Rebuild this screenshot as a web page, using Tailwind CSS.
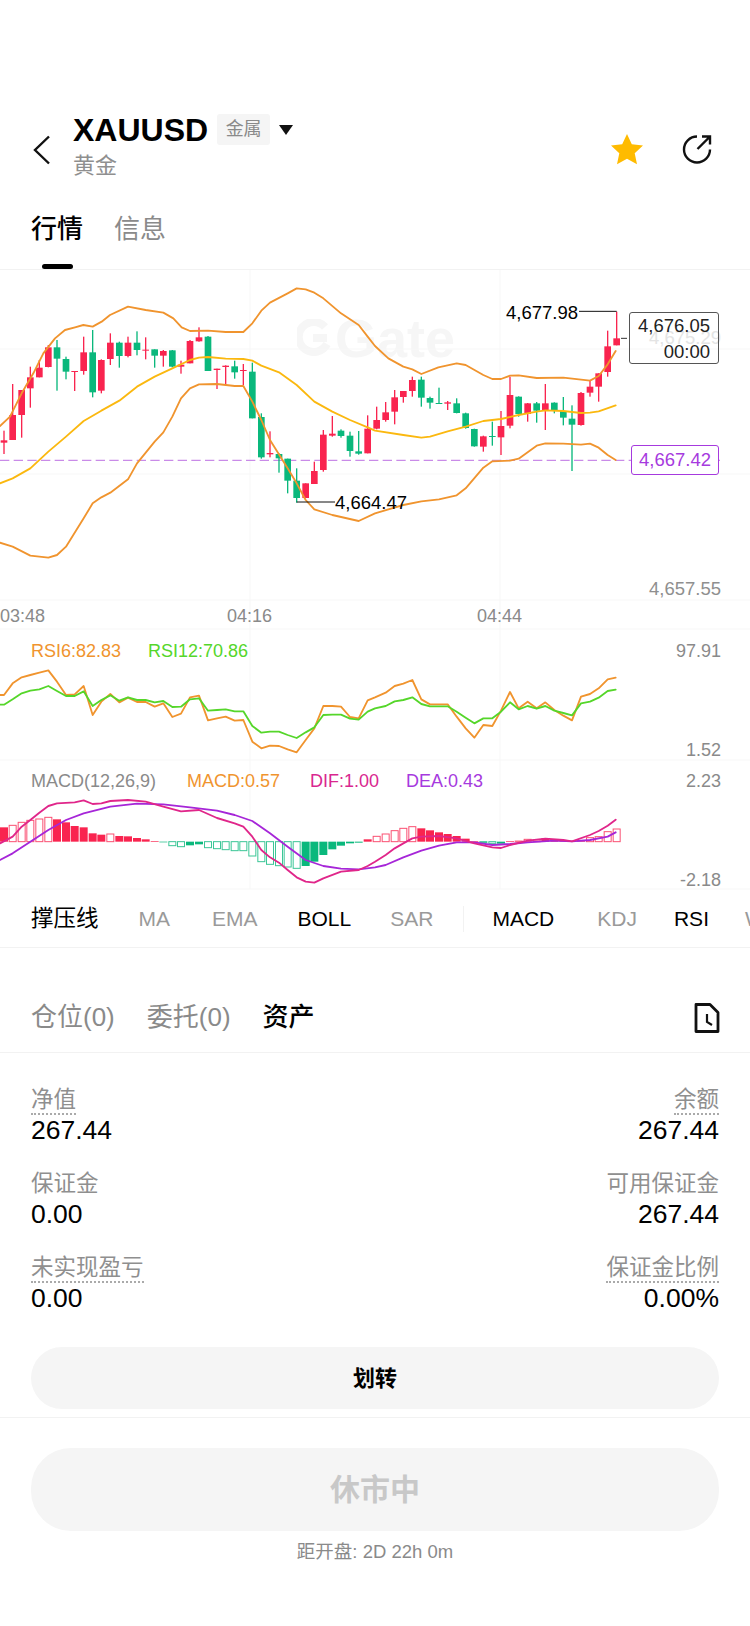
<!DOCTYPE html>
<html lang="zh">
<head>
    <meta charset="UTF-8">
    <meta name="viewport" content="width=device-width, initial-scale=1.0">
    <title>XAUUSD</title>
    <script src="https://cdn.jsdelivr.net/npm/@tailwindcss/browser@4"></script>
</head>
<body class="bg-white text-black font-['Liberation_Sans','Noto_Sans_CJK_SC',sans-serif]">
<div class="w-[750px] h-[1626px] overflow-hidden flex flex-col">

    <!-- header -->
    <div class="h-[200px] pt-[114px] pl-[33px] pr-[38px] flex items-start shrink-0">
        <svg width="18" height="30" viewBox="0 0 18 30" class="mt-[21px] mr-[22px] shrink-0" fill="none" stroke="#111" stroke-width="2.4"><path d="M16 1.5 2 15l14 13.5"/></svg>
        <div>
            <div class="flex items-center h-[31px]">
                <span class="text-[32px] font-bold leading-none">XAUUSD</span>
                <span class="ml-[9px] w-[53px] h-[31px] bg-[#f5f5f5] rounded-[3px] flex items-center justify-center text-[18px] text-[#8a8a8a]">金属</span>
                <svg width="14" height="10" viewBox="0 0 14 10" class="ml-[9px]"><path d="M0 0h14L7 10z" fill="#111"/></svg>
            </div>
            <div class="text-[22px] leading-none text-[#8f8f8f] mt-[10px]">黄金</div>
        </div>
        <div class="ml-auto flex items-center gap-[38px] mt-[19px]">
            <svg width="34" height="32" viewBox="0 0 34 32"><path d="M17 1l4.8 10.3 11.2 1.3-8.300 7.600 2.300 11.100-10-5.600-10 5.600 2.300-11.100L1 12.600l11.200-1.300z" fill="#ffbb00"/></svg>
            <svg width="30" height="30" viewBox="0 0 30 30" fill="none" stroke="#111" stroke-width="2.4"><path d="M15 2.500A13 13 0 1 0 28 15.500"/><path d="M15.500 15 27.500 3M20 2.500h8v8"/></svg>
        </div>
    </div>

    <!-- tabs -->
    <div class="h-[70px] shrink-0 border-b border-[#f2f2f2] pl-[31px] pt-[9px] relative flex items-start gap-[31px]">
        <span class="text-[26px] leading-[40px] font-medium">行情</span>
        <span class="text-[26px] leading-[40px] text-[#8a8a8a]">信息</span>
        <div class="absolute left-[42px] bottom-0 w-[31px] h-[5px] rounded-full bg-black"></div>
    </div>

    <!-- chart -->
    <div class="relative h-[620px] shrink-0">
        <div class="absolute left-[335px] top-[38px] text-[54px] font-bold leading-[60px] text-[#f6f6f6]">Gate</div>
        <svg class="absolute left-[297px] top-[49px]" width="34" height="38" viewBox="0 0 34 38" fill="none" stroke="#f6f6f6" stroke-width="8"><path d="M28 8A15 15 0 1 0 30 25"/><path d="M16 19h14"/></svg>
        <svg id="chart" class="absolute left-0 top-0" width="750" height="620" viewBox="0 0 2250 1860"></svg>

        <!-- price labels -->
        <span class="absolute left-[506px] top-[43px] -translate-y-1/2 text-[18.500px] leading-none">4,677.98</span>
        <span class="absolute left-[335px] top-[233px] -translate-y-1/2 text-[18.500px] leading-none">4,664.47</span>
        <span class="absolute right-[29px] top-[68px] -translate-y-1/2 text-[18.500px] leading-none text-[#e4e4e4]">4,675.29</span>
        <div class="absolute left-[629px] top-[42px] w-[90px] h-[52px] pt-[2px] border border-[#555] rounded-[3px] flex flex-col items-end justify-center pr-[8px] text-[18.500px] leading-[26px] text-[#222]">
            <span>4,676.05</span>
            <span>00:00</span>
        </div>
        <div class="absolute left-[631px] top-[175px] w-[88px] h-[30px] border border-[#a63ade] rounded-[3px] bg-white flex items-center justify-center text-[18.500px] leading-none text-[#a63ade]">4,667.42</div>
        <span class="absolute right-[29px] top-[319px] -translate-y-1/2 text-[18.500px] leading-none text-[#8f8f8f]">4,657.55</span>

        <!-- time axis -->
        <span class="absolute left-0 top-[346px] -translate-y-1/2 text-[18px] leading-none text-[#8a8a8a]">03:48</span>
        <span class="absolute left-[227px] top-[346px] -translate-y-1/2 text-[18px] leading-none text-[#8a8a8a]">04:16</span>
        <span class="absolute left-[477px] top-[346px] -translate-y-1/2 text-[18px] leading-none text-[#8a8a8a]">04:44</span>

        <!-- RSI -->
        <span class="absolute left-[31px] top-[381px] -translate-y-1/2 text-[18px] leading-none text-[#f0942e]">RSI6:82.83</span>
        <span class="absolute left-[148px] top-[381px] -translate-y-1/2 text-[18px] leading-none text-[#55d62a]">RSI12:70.86</span>
        <span class="absolute right-[29px] top-[381px] -translate-y-1/2 text-[18px] leading-none text-[#8a8a8a]">97.91</span>
        <span class="absolute right-[29px] top-[480px] -translate-y-1/2 text-[18px] leading-none text-[#8a8a8a]">1.52</span>

        <!-- MACD -->
        <span class="absolute left-[31px] top-[511px] -translate-y-1/2 text-[18px] leading-none text-[#8a8a8a]">MACD(12,26,9)</span>
        <span class="absolute left-[187px] top-[511px] -translate-y-1/2 text-[18px] leading-none text-[#f0942e]">MACD:0.57</span>
        <span class="absolute left-[310px] top-[511px] -translate-y-1/2 text-[18px] leading-none text-[#d9278f]">DIF:1.00</span>
        <span class="absolute left-[406px] top-[511px] -translate-y-1/2 text-[18px] leading-none text-[#a63ade]">DEA:0.43</span>
        <span class="absolute right-[29px] top-[511px] -translate-y-1/2 text-[18px] leading-none text-[#8a8a8a]">2.23</span>
        <span class="absolute right-[29px] top-[610px] -translate-y-1/2 text-[18px] leading-none text-[#8a8a8a]">-2.18</span>
    </div>

    <!-- indicators -->
    <div class="h-[58px] shrink-0 border-b border-[#f2f2f2] pl-[31px] flex items-center overflow-hidden whitespace-nowrap text-[21px] text-[#9a9a9a]">
        <span class="text-[22.500px] text-black">撑压线</span>
        <span class="ml-[40px]">MA</span>
        <span class="ml-[42px]">EMA</span>
        <span class="ml-[40px] text-black">BOLL</span>
        <span class="ml-[39px]">SAR</span>
        <div class="ml-[30px] w-px h-[26px] bg-[#f2f2f2] shrink-0"></div>
        <span class="ml-[28px] text-black">MACD</span>
        <span class="ml-[43px]">KDJ</span>
        <span class="ml-[37px] text-black">RSI</span>
        <span class="ml-[36px]">WR</span>
    </div>

    <!-- positions tabs -->
    <div class="h-[105px] shrink-0 border-b border-[#f2f2f2] pl-[31px] pr-[30px] pt-[35px] flex items-center gap-[32px] text-[26px] text-[#8a8a8a]">
        <span>仓位(0)</span>
        <span>委托(0)</span>
        <span class="text-black font-medium">资产</span>
        <svg width="26" height="30" viewBox="0 0 26 30" class="ml-auto" fill="none" stroke="#111" stroke-width="2.800"><path d="M2 1.500h14l8 8V28.500H2z" stroke-linejoin="round"/><path d="M13 11v8l5 3" stroke-width="2.200"/></svg>
    </div>

    <!-- assets -->
    <div class="px-[31px] pt-[34px] shrink-0 grid grid-cols-2 gap-y-[26px]">
        <div>
            <span class="inline-block text-[22.500px] leading-[26px] text-[#8f8f8f] border-b-2 border-dotted border-[#aaa]">净值</span>
            <div class="text-[26.500px] leading-[30px]">267.44</div>
        </div>
        <div class="text-right">
            <span class="inline-block text-[22.500px] leading-[26px] text-[#8f8f8f] border-b-2 border-dotted border-[#aaa]">余额</span>
            <div class="text-[26.500px] leading-[30px]">267.44</div>
        </div>
        <div>
            <span class="inline-block text-[22.500px] leading-[26px] text-[#8f8f8f] border-b-2 border-transparent">保证金</span>
            <div class="text-[26.500px] leading-[30px]">0.00</div>
        </div>
        <div class="text-right">
            <span class="inline-block text-[22.500px] leading-[26px] text-[#8f8f8f] border-b-2 border-transparent">可用保证金</span>
            <div class="text-[26.500px] leading-[30px]">267.44</div>
        </div>
        <div>
            <span class="inline-block text-[22.500px] leading-[26px] text-[#8f8f8f] border-b-2 border-dotted border-[#aaa]">未实现盈亏</span>
            <div class="text-[26.500px] leading-[30px]">0.00</div>
        </div>
        <div class="text-right">
            <span class="inline-block text-[22.500px] leading-[26px] text-[#8f8f8f] border-b-2 border-dotted border-[#aaa]">保证金比例</span>
            <div class="text-[26.500px] leading-[30px]">0.00%</div>
        </div>
    </div>

    <div class="mx-[31px] mt-[34px] h-[62px] shrink-0 rounded-full bg-[#f5f5f5] flex items-center justify-center text-[22px] font-bold">划转</div>
    <div class="mt-[8px] border-t border-[#f2f2f2] px-[31px] pt-[30px] shrink-0">
        <div class="h-[83px] rounded-[40px] bg-[#f5f5f5] flex items-center justify-center text-[30px] font-bold text-[#c8c8c8]">休市中</div>
        <div class="mt-[9px] text-center text-[18.500px] leading-[24px] text-[#8a8a8a]">距开盘: 2D 22h 0m</div>
    </div>
</div>

<script>
    const R = '#f9244f', G = '#0ab87c';
    // [x, wickTop, wickBottom, bodyTop, bodyBottom, colour], measured in 3x chart units
    const left = [
        [12,482,552,511,518,R],[38,342,510,435,510,R],[65,360,503,360,435,R],[91,290,413,322,355,R],
        [118,270,322,293,322,R],[145,225,292,232,291,R],[171,210,362,232,266,G],[198,260,328,267,305,G],
        [224,303,363,303,306,R],[251,200,314,247,303,R],[278,180,382,247,367,G],[304,268,370,270,362,R],
        [331,190,285,218,267,R],[358,215,293,218,258,G],[384,200,262,218,258,R],[411,184,256,218,240,G],
        [437,202,268,239,242,R],[464,238,293,238,257,G],[490,240,290,243,257,R],[517,240,292,241,290,G],
        [543,272,311,284,290,R],[570,210,280,213,280,R],[597,172,215,202,214,R],[624,198,303,200,303,G],
        [651,296,357,296,300,R],[677,286,344,287,291,R],[704,272,326,289,307,G],[730,282,345,300,303,R],
        [757,278,445,305,445,G],[784,430,566,441,562,G],[810,484,562,549,553,R],[837,550,608,552,565,G],
        [863,566,670,566,632,G],[890,595,698,632,684,G],[917,640,684,640,684,R],[943,575,642,603,642,R],
        [970,480,605,494,600,R],[997,438,500,491,497,R],[1023,478,503,482,498,G],[1050,485,560,497,543,G],
        [1076,483,554,544,551,G],[1103,436,550,476,550,R]
    ];
    const right = [
        [5,410,478,450,476,R],[32,396,455,427,450,R],[59,360,463,382,425,R],[85,363,398,363,381,R],
        [112,320,380,330,363,R],[139,320,410,329,383,G],[165,380,416,384,398,G],[192,353,402,399,401,G],
        [218,393,420,397,401,R],[245,385,430,400,429,G],[272,428,476,430,474,G],[298,476,530,477,529,G],
        [325,497,545,499,530,R],[352,455,527,498,501,G],[378,423,555,468,502,R],[405,320,475,375,467,R],
        [431,379,440,380,432,G],[458,399,455,400,432,R],[485,396,458,400,422,G],[511,342,480,400,420,R],
        [538,397,430,398,420,G],[565,381,466,423,443,G],[591,406,603,446,464,G],[618,366,467,369,465,R],
        [645,330,380,350,368,R],[671,310,395,310,350,R],[698,182,320,229,306,R],[725,125,226,205,226,R]
    ];
    const candles = left.concat(right.map(c => [c[0] + 1125, ...c.slice(1)]));

    const join = (a, b) => a.concat(b.map(p => [p[0] + 1125, p[1]]));
    const upper = join(
        [[0,468],[30,440],[65,370],[100,310],[130,250],[165,205],[195,180],[225,172],[250,165],[278,170],[305,155],[330,135],[384,110],[437,120],[490,128],[520,145],[545,172],[570,183],[624,182],[677,186],[730,186],[757,160],[784,122],[810,98],[863,70],[890,55],[917,58],[943,68],[970,85],[1023,130],[1076,165],[1103,200]],
        [[0,228],[40,265],[85,290],[112,298],[139,312],[190,292],[245,280],[272,285],[325,315],[352,327],[378,327],[405,317],[431,316],[485,324],[565,323],[645,332],[671,318],[698,283],[722,243]]);
    const mid = join(
        [[0,640],[38,625],[91,595],[145,545],[198,500],[251,453],[304,422],[358,392],[411,350],[464,320],[517,295],[570,270],[597,263],[624,261],[677,266],[730,267],[757,272],[784,287],[837,307],[890,345],[943,395],[997,425],[1050,450],[1103,472]],
        [[0,482],[85,495],[139,503],[165,500],[218,484],[272,470],[325,453],[378,447],[431,435],[485,425],[511,421],[565,423],[618,429],[645,428],[671,424],[722,406]]);
    const lower = join(
        [[0,818],[38,830],[91,857],[145,863],[171,855],[198,830],[251,745],[278,700],[304,682],[331,668],[384,628],[411,580],[464,515],[490,487],[517,440],[543,385],[570,355],[597,343],[651,342],[704,348],[730,348],[757,395],[784,450],[810,510],[863,595],[890,640],[917,690],[943,718],[997,735],[1076,753]],
        [[0,730],[85,705],[139,694],[192,688],[245,676],[272,655],[325,593],[352,574],[405,572],[431,566],[485,527],[511,520],[565,521],[618,524],[645,521],[671,533],[698,555],[722,570]]);

    const rsi6 = join(
        [[0,225],[12,225],[38,190],[65,172],[91,165],[118,158],[145,151],[171,185],[198,225],[224,223],[251,198],[278,285],[304,245],[331,222],[358,247],[384,233],[411,246],[437,246],[464,260],[490,250],[517,291],[543,281],[570,232],[597,227],[624,301],[651,295],[677,290],[704,302],[730,300],[757,365],[784,385],[810,377],[837,378],[863,388],[890,397],[917,360],[943,325],[970,258],[997,258],[1023,260],[1050,291],[1076,295],[1103,241]],
        [[0,232],[32,218],[59,198],[85,191],[112,180],[139,238],[165,253],[218,253],[245,290],[272,325],[298,353],[325,315],[352,318],[378,272],[405,216],[431,265],[458,245],[485,265],[511,247],[538,270],[565,287],[591,301],[618,230],[645,222],[671,205],[698,178],[722,173]]);
    const rsi12 = join(
        [[0,254],[12,254],[38,238],[65,220],[91,212],[118,208],[145,198],[171,213],[198,228],[224,228],[251,214],[278,258],[304,240],[331,226],[358,242],[384,232],[411,240],[437,240],[464,247],[490,243],[517,261],[543,260],[570,238],[597,235],[624,272],[651,270],[677,268],[704,274],[730,274],[757,318],[784,338],[810,335],[837,335],[863,345],[890,354],[917,337],[943,322],[970,285],[997,284],[1023,284],[1050,296],[1076,299],[1103,275]],
        [[0,265],[32,258],[59,244],[85,240],[112,232],[139,252],[165,259],[218,259],[245,275],[272,293],[298,310],[325,295],[352,295],[378,275],[405,247],[431,268],[458,258],[485,266],[511,258],[538,272],[565,279],[591,286],[618,250],[645,245],[671,233],[698,213],[722,209]]);
    const dif = join(
        [[0,670],[38,650],[65,620],[91,600],[118,578],[145,558],[171,550],[224,547],[251,541],[278,552],[304,550],[331,543],[384,540],[437,545],[490,560],[543,574],[597,570],[651,594],[704,610],[730,620],[757,650],[784,690],[810,712],[837,728],[863,750],[890,772],[917,785],[943,788],[970,775],[1023,755],[1076,750],[1103,738]],
        [[0,725],[32,705],[59,685],[85,670],[112,655],[139,650],[192,648],[245,655],[298,670],[352,682],[378,684],[405,675],[458,662],[511,656],[565,660],[591,664],[645,645],[671,633],[698,617],[722,599]]);
    const dea = join(
        [[0,720],[38,700],[91,665],[145,630],[198,600],[251,580],[331,560],[411,551],[490,553],[570,562],[651,572],[704,585],[757,603],[810,640],[863,680],[917,720],[970,738],[1023,746],[1076,748]],
        [[0,742],[32,735],[85,712],[139,692],[192,677],[245,667],[298,667],[352,675],[405,672],[458,667],[538,662],[591,664],[645,660],[698,650],[722,637]]);

    // MACD bars: [x, end value, hollow]
    const bars = [
        [12,622,0],[38,616,1],[65,607,1],[91,601,1],[118,597,1],[145,592,1],[171,598,0],[198,607,0],[224,618,0],[251,622,0],
        [278,640,0],[304,644,0],[331,642,1],[358,648,0],[384,649,0],[411,654,0],[437,658,0],[464,664,0],[490,667,0],[517,677,1],
        [543,680,1],[570,676,0],[597,673,0],[624,683,1],[651,686,1],[677,689,1],[704,692,1],[730,692,1],[757,708,1],[784,725,1],
        [810,733,1],[837,737,1],[863,741,1],[890,745,1],[917,738,0],[943,725,0],[970,705,0],[997,688,0],[1023,677,0],[1050,670,0],
        [1076,668,0],[1103,658,0],[1130,649,1],[1157,642,1],[1184,632,1],[1210,625,1],[1237,620,1],[1264,625,0],[1290,631,0],
        [1317,637,0],[1343,642,0],[1370,648,0],[1397,656,0],[1423,663,0],[1450,668,1],[1477,670,1],[1503,671,0],[1530,664,0],
        [1556,662,0],[1583,658,1],[1610,660,1],[1636,655,0],[1663,657,0],[1690,662,0],[1716,664,0],[1743,660,0],[1770,653,1],
        [1796,650,1],[1823,635,1],[1850,627,1]
    ];

    const polyline = (pts, stroke, w, dy = 0) =>
        `<polyline points="${pts.map(p => p[0] + ',' + (p[1] + dy)).join(' ')}" fill="none" stroke="${stroke}" stroke-width="${w}" stroke-linejoin="round" stroke-linecap="round"/>`;

    let out = '';
    // grid
    [750,1500].forEach(x => out += `<line x1="${x}" y1="0" x2="${x}" y2="1857" stroke="#f7f7f7" stroke-width="3"/>`);
    [237,612,990,1077,1470,1857].forEach(y => out += `<line x1="0" y1="${y}" x2="2250" y2="${y}" stroke="#f7f7f7" stroke-width="3"/>`);

    // dashed price line
    out += `<line x1="0" y1="571" x2="2160" y2="571" stroke="#c98be8" stroke-width="3.500" stroke-dasharray="28 13"/>`;

    candles.forEach(c => {
        out += `<rect x="${c[0] - 2}" y="${c[1]}" width="4" height="${c[2] - c[1]}" fill="${c[5]}"/>`;
        out += `<rect x="${c[0] - 10}" y="${c[3]}" width="20" height="${Math.max(c[4] - c[3], 3)}" fill="${c[5]}"/>`;
    });
    out += polyline(upper, '#f0942e', 5.500);
    out += polyline(lower, '#f0942e', 5.500);
    out += polyline(mid, '#fbb80f', 5.500);

    // high / low / last price leaders
    out += `<path d="M1737 124H1850M890 696H1005" stroke="#111" stroke-width="3" fill="none"/>`;
    out += `<path d="M1863 205H1881" stroke="#333" stroke-width="3"/>`;

    // RSI
    const rsiTop = 1050;
    out += polyline(rsi6, '#f0942e', 5.500, rsiTop);
    out += polyline(rsi12, '#55d62a', 5.500, rsiTop);

    // MACD
    const zero = 665;
    bars.forEach(b => {
        const col = b[1] <= zero ? R : G;
        const top = Math.min(b[1], zero), h = Math.max(Math.abs(b[1] - zero), 2);
        if (b[2]) {
            out += `<rect x="${b[0] - 10.500}" y="${top + rsiTop}" width="21" height="${h}" fill="#fff" fill-opacity="0.9" stroke="${col}" stroke-opacity="0.8" stroke-width="3"/>`;
        } else {
            out += `<rect x="${b[0] - 12}" y="${top + rsiTop}" width="24" height="${h}" fill="${col}"/>`;
        }
    });
    out += polyline(dea, '#a626d8', 5.500, rsiTop);
    out += polyline(dif, '#e0268a', 5.500, rsiTop);

    document.getElementById('chart').innerHTML = out;
</script>
</body>
</html>
